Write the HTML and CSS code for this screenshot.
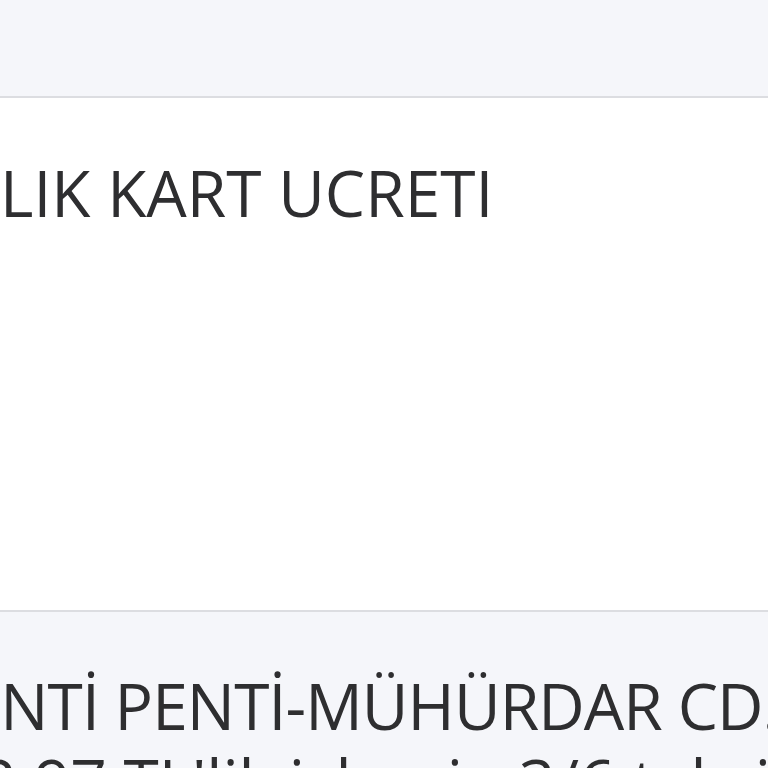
FILE: index.html
```html
<!DOCTYPE html>
<html lang="tr">
<head>
  <meta charset="UTF-8" />
  <meta name="viewport" content="width=device-width, initial-scale=1.0" />
  <title>Hesap Hareketleri</title>
  <link rel="stylesheet" href="styles.css">
</head>
<body>
  <div class="list">
    <div class="group-head"></div>

    <div class="item item-white">
      <div class="item-title">YILLIK KART UCRETI</div>
    </div>

    <div class="item item-grey">
      <div class="merchant">PENTİ PENTİ-MÜHÜRDAR CD.</div>
      <div class="detail">42,97 TL'lik işlemin 3/6 taksidi</div>
    </div>
  </div>
</body>
</html>
```

FILE: styles.css
```css
* {
  box-sizing: border-box;
  margin: 0;
  padding: 0;
  font-family: 'Open Sans', 'DejaVu Sans', sans-serif;
}

html, body {
  width: 768px;
  height: 768px;
  overflow: hidden;
  background: #f5f6fa;
}

.list {
  display: flex;
  flex-direction: column;
  height: 768px;
  overflow: hidden;
}

.group-head {
  flex: none;
  height: 98px;
  background: #f5f6fa;
  border-bottom: 2px solid #dcdde1;
}

.item {
  flex: none;
  overflow: hidden;
  white-space: nowrap;
  color: #2e2e30;
}

.item-white {
  background: #fff;
  height: 514px;
  padding-top: 55px;
  border-bottom: 2px solid #dcdde1;
}

.item-title {
  font-size: 64px;
  line-height: 79px;
  margin-left: -87px;
}

.item-grey {
  flex: 1;
  background: #f5f6fa;
  padding-top: 60px;
}

.merchant {
  font-size: 64px;
  line-height: 68px;
  letter-spacing: -0.9px;
  margin-left: -72px;
}

.detail {
  font-size: 64px;
  line-height: 68px;
  margin-top: 8px;
  margin-left: -56px;
}
```
